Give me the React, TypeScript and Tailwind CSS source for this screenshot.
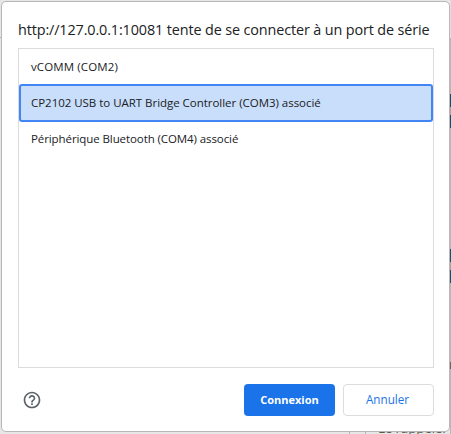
import React from 'react';

const ports = [
  { name: 'vCOMM (COM2)', tracking: 'tracking-[0.12px]' },
  { name: 'CP2102 USB to UART Bridge Controller (COM3) associé', tracking: 'tracking-[-0.03px]', selected: true },
  { name: 'Périphérique Bluetooth (COM4) associé', tracking: 'tracking-[-0.09px]' },
];

/* Colours down the right edge of the page, from top to bottom. */
const edge = [
  'h-[38px] bg-[#e0e0e0]',
  'h-[56px] bg-[#b8b8b8]',
  'h-[13px] bg-[#0b5573]',
  'h-[8px] bg-[#a9a0a0]',
  'h-[13px] bg-[#0b5573]',
  'h-[121px] bg-[#b8b8b8]',
  'h-[13px] bg-[#0b5573]',
  'h-[8px] bg-[#a9a0a0]',
  'h-[13px] bg-[#0b5573]',
  'h-[79px] bg-[#b8b8b8]',
  'h-[7px] bg-[#6b665c]',
  'h-[65px] bg-[#b8b8b8]',
];

function HelpIcon() {
  return (
    <svg viewBox="0 0 24 24" className="size-5 fill-[#5f6368]" aria-hidden="true">
      <path d="M11 18h2v-2h-2v2zm1-16C6.48 2 2 6.48 2 12s4.48 10 10 10 10-4.48 10-10S17.52 2 12 2zm0 18c-4.41 0-8-3.59-8-8s3.59-8 8-8 8 3.59 8 8-3.59 8-8 8zm0-14c-2.21 0-4 1.79-4 4h2c0-1.1.9-2 2-2s2 .9 2 2c0 2-3 1.75-3 5h2c0-2.25 3-2.5 3-5 0-2.21-1.79-4-4-4z" />
    </svg>
  );
}

/* Slivers of the page that show around the dialog. */
function PageBehind() {
  return (
    <div className="col-start-1 row-start-1 flex h-[434px] items-end bg-[#e6e6e6]" aria-hidden="true">
      <div className="mb-[396px] h-px w-[2px] bg-[#b5b5b5]" />
      <div className="ml-[347px] h-[3px] w-px bg-[#b5b5b5]" />
      <div className="ml-[15px] h-[3px] w-px bg-[#b5b5b5]" />
      <div className="-mb-1 ml-3 w-[72px] whitespace-nowrap text-[13.5px] leading-5 tracking-[-0.2px] text-[#5c5850]">Le rappeler</div>
      <div className="flex w-px flex-col">
        {edge.map((c, i) => (
          <div key={i} className={c} />
        ))}
      </div>
    </div>
  );
}

export default function App() {
  return (
    <div className="grid h-[434px] w-[451px] overflow-hidden font-['Open_Sans','Noto_Sans',sans-serif] text-[#202124]">
      <PageBehind />
      <main className="z-10 col-start-1 row-start-1 ml-px mt-px flex h-[431px] w-[449px] flex-col rounded-[5px] border border-[#b8b8b8] bg-white pb-[14px] pl-4 pr-[15px] pt-[18px]">
        <h1 className="h-[28px] whitespace-nowrap text-[14.4px] leading-5 tracking-[-0.125px]">
          http://127.0.0.1:10081 tente de se connecter à un port de série
        </h1>
        <ul className="h-[320px] w-[416px] border border-[#dadce0]">
          {ports.map((p) => (
            <li
              key={p.name}
              className={`flex items-center whitespace-nowrap text-[11.5px] ${p.tracking} ${
                p.selected ? '-my-px h-[38px] rounded-[3px] border-2 border-[#4285f4] bg-[#c9defa] pl-[10px]' : 'h-9 pl-3'
              }`}
            >
              {p.name}
            </li>
          ))}
        </ul>
        <div className="mt-4 flex h-8 items-center justify-between pl-1">
          <HelpIcon />
          <div className="flex gap-2">
            <button className="h-8 w-[91px] rounded bg-[#1a73e8] text-[11px] font-bold text-white">Connexion</button>
            <button className="h-8 w-[91px] rounded border border-[#dadce0] pr-[2px] text-[11.7px] text-[#1a73e8]">Annuler</button>
          </div>
        </div>
      </main>
    </div>
  );
}
